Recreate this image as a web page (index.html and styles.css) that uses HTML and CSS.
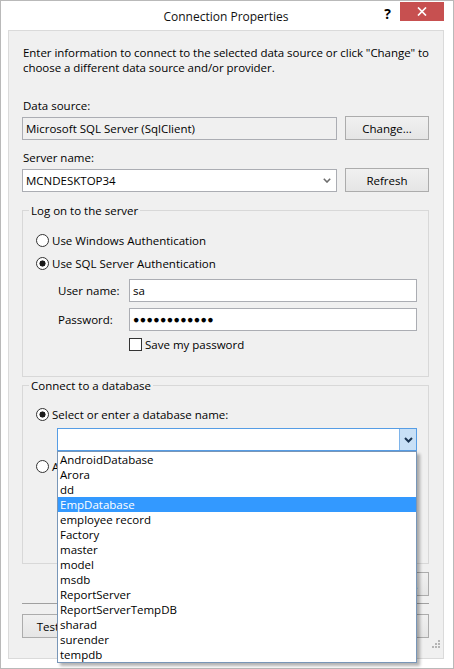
FILE: index.html
```html
<!DOCTYPE html>
<html lang="en">
<head>
    <meta charset="UTF-8">
    <title>Connection Properties</title>
    <link rel="stylesheet" href="styles.css">
</head>
<body>
    <div class="dialog">
        <div class="titlebar">
            <span></span>
            <span class="title">Connection Properties</span>
            <div class="caption-buttons">
                <span class="help">?</span>
                <span class="close">
                    <svg width="10" height="9" viewBox="0 0 10 9"><path d="M1 0.5 L9 8.5 M9 0.5 L1 8.5" stroke="#fff" stroke-width="1.7" fill="none"/></svg>
                </span>
            </div>
        </div>

        <div class="client">
            <p class="intro">Enter information to connect to the selected data source or click "Change" to<br>choose a different data source and/or provider.</p>

            <div class="label first">Data source:</div>
            <div class="row">
                <div class="textbox readonly">Microsoft SQL Server (SqlClient)</div>
                <button class="btn">Change...</button>
            </div>

            <div class="label">Server name:</div>
            <div class="row">
                <div class="textbox combo">
                    <span>MCNDESKTOP34</span>
                    <svg width="8" height="5" viewBox="0 0 8 5"><path d="M0.8 0.8 L4 4 L7.2 0.8" stroke="#6d6d6d" stroke-width="1.6" fill="none"/></svg>
                </div>
                <button class="btn">Refresh</button>
            </div>

            <fieldset class="group logon">
                <legend>Log on to the server</legend>
                <div class="group-body">
                    <div class="option"><span class="radio"></span>Use Windows Authentication</div>
                    <div class="option"><span class="radio checked"></span>Use SQL Server Authentication</div>
                    <div class="credentials">
                        <span>User name:</span>
                        <div class="textbox">sa</div>
                        <span>Password:</span>
                        <div class="textbox password">●●●●●●●●●●●●</div>
                        <span></span>
                        <div class="check-row"><span class="checkbox"></span>Save my password</div>
                    </div>
                </div>
            </fieldset>

            <fieldset class="group database">
                <legend>Connect to a database</legend>
                <div class="group-body">
                    <div class="option"><span class="radio checked"></span>Select or enter a database name:</div>
                    <div class="db-combo">
                        <div class="textbox combo dropped">
                            <span></span>
                            <span class="drop-btn">
                                <svg width="9" height="6" viewBox="0 0 9 6"><path d="M1 1 L4.5 4.5 L8 1" stroke="#1b3552" stroke-width="2" fill="none"/></svg>
                            </span>
                        </div>
                        <ul class="dropdown">
                            <li>AndroidDatabase</li>
                            <li>Arora</li>
                            <li>dd</li>
                            <li class="selected">EmpDatabase</li>
                            <li>employee record</li>
                            <li>Factory</li>
                            <li>master</li>
                            <li>model</li>
                            <li>msdb</li>
                            <li>ReportServer</li>
                            <li>ReportServerTempDB</li>
                            <li>sharad</li>
                            <li>surender</li>
                            <li>tempdb</li>
                        </ul>
                    </div>
                    <div class="option attach"><span class="radio"></span>Attach a database file:</div>
                </div>
            </fieldset>

            <div class="advanced-row">
                <button class="btn">Advanced...</button>
            </div>
            <hr class="separator">
            <div class="footer">
                <button class="btn test">Test Connection</button>
                <div class="footer-right">
                    <button class="btn">OK</button>
                    <button class="btn">Cancel</button>
                </div>
            </div>

            <span class="grip">
                <svg width="9" height="9" viewBox="0 0 9 9" fill="#b5b5b5">
                    <rect x="6" y="0" width="2" height="2"/>
                    <rect x="3" y="3" width="2" height="2"/>
                    <rect x="6" y="3" width="2" height="2"/>
                    <rect x="0" y="6" width="2" height="2"/>
                    <rect x="3" y="6" width="2" height="2"/>
                    <rect x="6" y="6" width="2" height="2"/>
                </svg>
            </span>
        </div>
    </div>
</body>
</html>
```

FILE: styles.css
```css
* {
    box-sizing: border-box;
}
body {
    margin: 0;
    font-family: "Open Sans", sans-serif;
    font-size: 11.5px;
    line-height: 15px;
    color: #000;
    background: #fff;
}
.dialog {
    width: 454px;
    height: 669px;
    display: flex;
    flex-direction: column;
    padding: 0 9px 9px 7px;
    background: #fff;
    border: 1px solid #b9b9b9;
}
.titlebar {
    height: 29px;
    flex-shrink: 0;
    display: grid;
    grid-template-columns: 1fr auto 1fr;
    align-items: start;
}
.title {
    margin-top: 8px;
    font-size: 12px;
    color: #111;
}
.caption-buttons {
    display: flex;
    justify-content: flex-end;
    align-items: flex-start;
    gap: 9px;
}
.help {
    margin-top: 5px;
    font-size: 14px;
    font-weight: bold;
}
.close {
    width: 44px;
    height: 19px;
    margin-top: 1px;
    background: #c75050;
    display: flex;
    align-items: center;
    justify-content: center;
}
.client {
    flex: 1;
    position: relative;
    background: #f0f0f0;
    border: 1px solid #dadada;
    padding: 0 14px 0 13px;
}
.intro {
    margin: 14px 0 0 1px;
    white-space: nowrap;
    letter-spacing: -0.05px;
}
.label {
    margin: 10px 0 0 1px;
}
.label.first {
    margin-top: 23px;
}
.row {
    margin-top: 3px;
    display: flex;
    align-items: center;
    gap: 8px;
}
.textbox {
    height: 23px;
    padding: 0 3px;
    background: #fff;
    border: 1px solid #abadb3;
    display: flex;
    align-items: center;
    white-space: nowrap;
}
.row .textbox {
    flex: 1;
}
.textbox.readonly {
    background: #f0f0f0;
}
.combo {
    justify-content: space-between;
    padding-right: 5px;
}
.combo.dropped {
    padding-right: 0;
    border-color: #569de5;
}
.drop-btn {
    width: 17px;
    height: 100%;
    background: #c8e0f6;
    border-left: 1px solid #7eb4ea;
    display: flex;
    align-items: center;
    justify-content: center;
}
.btn {
    width: 84px;
    height: 24px;
    padding: 0;
    font: inherit;
    color: #000;
    background: linear-gradient(#f0f0f0, #e5e5e5);
    border: 1px solid #acacac;
}
.group {
    margin: 11px 0 0;
    padding: 0;
    min-width: 0;
    border: 1px solid #d8d8d8;
}
.group legend {
    margin-left: 6px;
    padding: 0 2px;
}
.group.database {
    margin-top: 1px;
}
.group-body {
    padding: 11px 11px 24px 13px;
}
.database .group-body {
    padding: 10px 11px 85px 13px;
}
.option {
    height: 23px;
    display: flex;
    align-items: center;
    gap: 3px;
}
.option.attach {
    margin-top: 4px;
}
.radio {
    width: 13px;
    height: 13px;
    border: 1px solid #333;
    border-radius: 50%;
    background: #fff;
}
.radio.checked {
    background: radial-gradient(circle, #1a1a1a 0 2.8px, #fff 3.3px);
}
.credentials {
    margin: 4px 0 0 22px;
    display: grid;
    grid-template-columns: 71px 1fr;
    row-gap: 6px;
    align-items: center;
}
.password {
    font-family: "Liberation Sans", sans-serif;
    font-size: 10.5px;
    letter-spacing: 0.4px;
}
.check-row {
    height: 15px;
    display: flex;
    align-items: center;
    gap: 3px;
}
.checkbox {
    width: 13px;
    height: 13px;
    background: #fff;
    border: 1px solid #333;
}
.db-combo {
    position: relative;
    margin: 2px 0 0 21px;
}
.dropdown {
    position: absolute;
    top: 100%;
    left: 0;
    right: 0;
    z-index: 2;
    margin: 0;
    padding: 0;
    list-style: none;
    background: #fff;
    border: 1px solid #7896b8;
    box-shadow: 3px 3px 3px rgba(0,0,0,0.3);
}
.dropdown li {
    height: 15px;
    padding-left: 2px;
    white-space: nowrap;
}
.dropdown li.selected {
    background: #3399ff;
    color: #fff;
}
.advanced-row {
    margin-top: 8px;
    display: flex;
    justify-content: flex-end;
}
.separator {
    margin: 7px 0 0;
    border: none;
    border-top: 1px solid #a0a0a0;
}
.footer {
    margin-top: 10px;
    display: flex;
    justify-content: space-between;
}
.footer-right {
    display: flex;
    gap: 8px;
}
.btn.test {
    width: 116px;
}
.grip {
    position: absolute;
    right: 2px;
    bottom: 9px;
    line-height: 0;
}
```
